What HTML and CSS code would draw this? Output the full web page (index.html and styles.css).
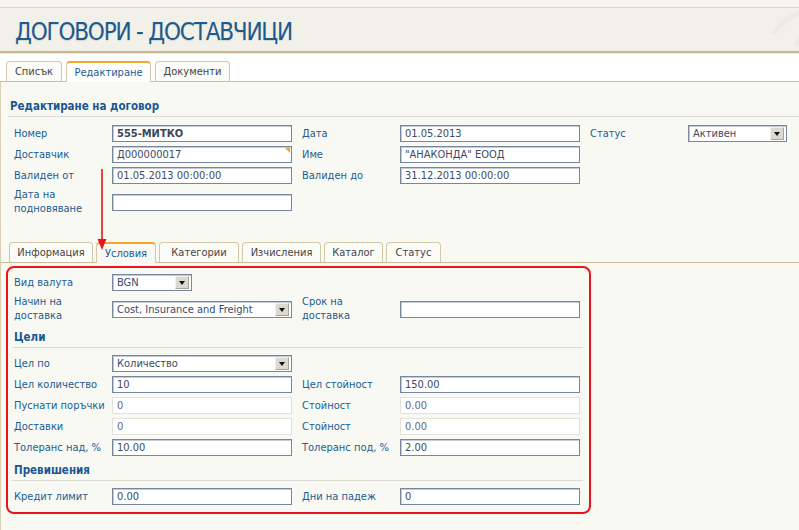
FILE: index.html
```html
<!DOCTYPE html>
<html lang="bg">
<head>
<meta charset="utf-8">
<title>Договори - Доставчици</title>
<link rel="stylesheet" href="styles.css">
</head>
<body>
<div class="page">
  <div class="topstrip"></div>
  <header class="header">
    <h1 class="title">ДОГОВОРИ - ДОСТАВЧИЦИ</h1>
    <svg class="swoosh" width="40" height="40" viewBox="0 0 40 40" aria-hidden="true">
      <path d="M12 26 C18 14 27 7 40 3 L40 8 C31 12 23 18 17 27 Z" fill="#ebeae3"/>
      <path d="M35 38 C36 32 38 29 40 27 L40 38 Z" fill="#ebeae3"/>
    </svg>
  </header>
  <div class="spacer"></div>

  <nav class="tabs tabs-main">
    <span class="tab t-list">Списък</span>
    <span class="tab active t-edit">Редактиране</span>
    <span class="tab t-docs">Документи</span>
  </nav>

  <main class="panel">
    <h2 class="section-title top-title">Редактиране на договор</h2>

    <div class="form">
      <div class="row">
        <span class="lbl">Номер</span>
        <span class="field input bold">555-МИТКО</span>
        <span class="lbl">Дата</span>
        <span class="field input">01.05.2013</span>
        <span class="lbl">Статус</span>
        <span class="select s-status">Активен<span class="dd"></span></span>
      </div>
      <div class="row">
        <span class="lbl">Доставчик</span>
        <span class="field input flagged">Д000000017</span>
        <span class="lbl">Име</span>
        <span class="field input">"АНАКОНДА" ЕООД</span>
      </div>
      <div class="row">
        <span class="lbl">Валиден от</span>
        <span class="field input">01.05.2013 00:00:00</span>
        <span class="lbl">Валиден до</span>
        <span class="field input">31.12.2013 00:00:00</span>
      </div>
      <div class="row">
        <span class="lbl two">Дата на<br>подновяване</span>
        <span class="field input"></span>
      </div>
    </div>

    <nav class="tabs tabs-sub">
      <span class="tab t-info">Информация</span>
      <span class="tab active t-cond">Условия</span>
      <span class="tab t-cat">Категории</span>
      <span class="tab t-calc">Изчисления</span>
      <span class="tab t-catalog">Каталог</span>
      <span class="tab t-status">Статус</span>
    </nav>

    <section class="conditions">
      <div class="row">
        <span class="lbl">Вид валута</span>
        <span class="select s-cur">BGN<span class="dd"></span></span>
      </div>
      <div class="row">
        <span class="lbl two">Начин на<br>доставка</span>
        <span class="field select">Cost, Insurance and Freight<span class="dd"></span></span>
        <span class="lbl two">Срок на<br>доставка</span>
        <span class="field input"></span>
      </div>

      <h3 class="section-title sub-title">Цели</h3>

      <div class="row">
        <span class="lbl">Цел по</span>
        <span class="field select">Количество<span class="dd"></span></span>
      </div>
      <div class="row">
        <span class="lbl">Цел количество</span>
        <span class="field input">10</span>
        <span class="lbl">Цел стойност</span>
        <span class="field input">150.00</span>
      </div>
      <div class="row">
        <span class="lbl">Пуснати поръчки</span>
        <span class="field input ro">0</span>
        <span class="lbl">Стойност</span>
        <span class="field input ro">0.00</span>
      </div>
      <div class="row">
        <span class="lbl">Доставки</span>
        <span class="field input ro">0</span>
        <span class="lbl">Стойност</span>
        <span class="field input ro">0.00</span>
      </div>
      <div class="row">
        <span class="lbl">Толеранс над, %</span>
        <span class="field input">10.00</span>
        <span class="lbl">Толеранс под, %</span>
        <span class="field input">2.00</span>
      </div>

      <h3 class="section-title sub-title">Превишения</h3>

      <div class="row">
        <span class="lbl">Кредит лимит</span>
        <span class="field input">0.00</span>
        <span class="lbl">Дни на падеж</span>
        <span class="field input">0</span>
      </div>
    </section>
  </main>

  <svg class="arrow" width="12" height="84" viewBox="0 0 12 84" aria-hidden="true">
    <line x1="6" y1="0" x2="6" y2="74" stroke="#e8141c" stroke-width="1.6"/>
    <polygon points="1.5,70 10.5,70 6,81" fill="#e8141c"/>
  </svg>
</div>
</body>
</html>
```

FILE: styles.css
```css
* { box-sizing: border-box; }

html, body {
  margin: 0;
  padding: 0;
}

body {
  background: #f9f9f4;
  font-family: "DejaVu Sans Condensed", "DejaVu Sans", sans-serif;
  font-size: 11px;
  color: #3b4a64;
}

.page {
  position: relative;
  width: 799px;
  height: 530px;
  overflow: hidden;
}

.topstrip {
  height: 8px;
  background: #f6f5ef;
  border-bottom: 1px solid #d6d6d2;
  box-shadow: 0 1px 0 #ffffff;
}

.header {
  position: relative;
  height: 45px;
  background: #f2f1e9;
  border-bottom: 2px solid #c9b68c;
  display: flex;
  align-items: center;
  padding-left: 15px;
}

.title {
  margin: 4px 0 0 0;
  font-family: "DejaVu Sans Condensed", "DejaVu Sans", sans-serif;
  font-weight: normal;
  font-size: 24px;
  letter-spacing: -1.2px;
  color: #1d5b8f;
  text-shadow: 0 1px 1px rgba(0, 0, 0, 0.12);
}

.swoosh {
  position: absolute;
  right: 0;
  top: 0;
}

.spacer {
  height: 8px;
  background: #ffffff;
  border-top: 1px solid #ebe9e2;
}

/* Tabs */
.tabs {
  display: flex;
  gap: 4px;
  height: 21px;
  border-bottom: 1px solid #cdbd96;
  align-items: flex-end;
}

.tabs-main {
  padding-left: 6px;
  background: #ffffff;
}

.tabs-sub {
  padding-left: 8px;
  gap: 3px;
  margin-top: 26px;
}

.tab {
  height: 20px;
  display: flex;
  align-items: center;
  justify-content: center;
  background: #fbfbf7;
  border: 1px solid #d3c8a8;
  border-bottom: none;
  border-radius: 4px 4px 0 0;
  color: #454545;
  font-size: 11px;
}

.tab.active {
  height: 21px;
  margin-bottom: -1px;
  background: #ffffff;
  border-top: 2px solid #f3a52c;
  color: #1b5c91;
}

.tabs-sub .tab.active {
  background: #f9f9f4;
}

.t-list { width: 56px; }
.t-edit { width: 85px; }
.t-docs { width: 75px; }

.t-info { width: 84px; }
.t-cond { width: 60px; }
.t-cat { width: 80px; }
.t-calc { width: 79px; }
.t-catalog { width: 59px; }
.t-status { width: 55px; }

/* Panel */
.panel {
  background: #f9f9f4;
  border-left: 1px solid #d9cfb3;
  height: 448px;
}

.section-title {
  margin: 0;
  font-weight: bold;
  font-size: 11.5px;
  line-height: 14px;
  color: #1a5692;
  border-bottom: 1px solid #dcdbd3;
}

.top-title {
  padding: 17px 0 3px 2px;
  margin: 0 0 8px 7px;
}

.sub-title {
  padding: 3px 0 3px 2px;
  margin: 0 2px 7px -2px;
}

.form {
  padding-left: 13px;
}

.row {
  display: flex;
  align-items: center;
  min-height: 17px;
  margin-bottom: 4px;
}

.lbl {
  width: 98px;
  flex: none;
  color: #1b5c91;
  line-height: 14px;
  white-space: nowrap;
}

.field {
  width: 180px;
  margin-right: 10px;
  flex: none;
}

.input,
.select {
  position: relative;
  display: block;
  height: 17px;
  line-height: 15px;
  padding-left: 4px;
  background: #ffffff;
  border: 1px solid #7686a0;
  box-shadow: inset 1px 1px 0 #c4cbd8;
  color: #3b4a64;
  white-space: nowrap;
  overflow: hidden;
}

.input.bold {
  font-weight: bold;
  color: #3a4658;
}

.input.ro {
  border-color: #e2e1da;
  box-shadow: none;
  color: #5e6a80;
}

.input.flagged::after {
  content: "";
  position: absolute;
  right: 1px;
  top: 1px;
  border-style: solid;
  border-width: 0 5px 5px 0;
  border-color: transparent #f0a030 transparent transparent;
}

.select .dd {
  position: absolute;
  right: 2px;
  top: 1px;
  width: 14px;
  height: 13px;
  background: #dcd9d0;
  border: 1px solid #a7a49c;
  border-top-color: #f2f1ec;
  border-left-color: #f2f1ec;
}

.select .dd::after {
  content: "";
  position: absolute;
  left: 3px;
  top: 4px;
  border-style: solid;
  border-width: 4px 3px 0 3px;
  border-color: #111 transparent transparent transparent;
}

.s-status { width: 99px; }
.s-cur { width: 80px; }

/* Conditions box */
.conditions {
  width: 585px;
  margin: 3px 0 0 5px;
  padding: 6px 4px 3px 6px;
  border: 2px solid #e8141c;
  border-radius: 8px;
}

.arrow {
  position: absolute;
  left: 96px;
  top: 169px;
}
```
